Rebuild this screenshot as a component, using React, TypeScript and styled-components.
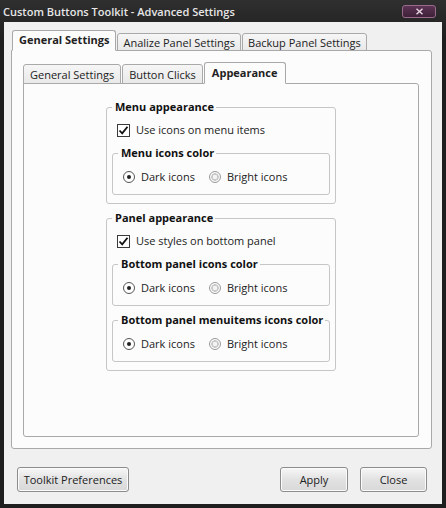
import React from 'react';
import styled, { createGlobalStyle } from 'styled-components';

const GlobalStyle = createGlobalStyle`
  html, body {
    margin: 0;
    padding: 0;
    background: #1c1c1c;
  }
  body {
    font-family: "Open Sans", "DejaVu Sans", sans-serif;
    font-size: 11px;
    color: #1a1a1a;
  }
`;

const Window = styled.div`
  width: 446px;
  height: 508px;
  box-sizing: border-box;
  display: flex;
  flex-direction: column;
  background: linear-gradient(#2f2f2f, #1e1e1e 40px);
  padding: 0 4px 4px 4px;
`;

const TitleBar = styled.div`
  height: 22px;
  display: flex;
  align-items: center;
  justify-content: space-between;
  margin-left: -1px;
`;

const TitleText = styled.span`
  color: #e6e6e6;
  font-weight: 600;
  font-size: 11px;
`;

const CloseBox = styled.div`
  width: 32px;
  height: 11px;
  margin-right: 6px;
  margin-top: 1px;
  border: 1px solid #9a6a8c;
  border-radius: 3px;
  background: linear-gradient(#5c3454, #3e2038);
  display: flex;
  align-items: center;
  justify-content: center;
`;

const Client = styled.div`
  flex: 1;
  background: #f0f0f0;
  display: flex;
  flex-direction: column;
  padding: 8px 10px 12px 7px;
`;

const TabStrip = styled.div<{ $indent: number }>`
  display: flex;
  align-items: flex-end;
  padding-left: ${(p) => p.$indent}px;
  position: relative;
  z-index: 1;
  margin-bottom: -1px;
`;

const Tab = styled.div<{ $active?: boolean; $h: number; $lift: number; $pad: number }>`
  height: ${(p) => (p.$active ? p.$h + p.$lift : p.$h)}px;
  box-sizing: border-box;
  padding: 0 ${(p) => p.$pad}px;
  display: flex;
  align-items: center;
  border: 1px solid #a9a9a9;
  border-bottom: 1px solid ${(p) => (p.$active ? '#fcfcfc' : '#a9a9a9')};
  border-radius: 3px 3px 0 0;
  margin-right: 1px;
  background: ${(p) => (p.$active ? '#fcfcfc' : 'linear-gradient(#f6f6f6, #e9e9e9)')};
  font-weight: ${(p) => (p.$active ? 700 : 400)};
  color: #222;
  white-space: nowrap;
  padding-bottom: ${(p) => (p.$active ? p.$lift : 0)}px;
`;

const OuterPanel = styled.div`
  flex: 1;
  background: #fcfcfc;
  border: 1px solid #a9a9a9;
  border-radius: 0 3px 3px 3px;
  display: flex;
  flex-direction: column;
  padding: 11px 12px 11px 11px;
`;

const InnerPanel = styled.div`
  flex: 1;
  background: #fcfcfc;
  border: 1px solid #a9a9a9;
  border-radius: 0 3px 3px 3px;
  display: flex;
  flex-direction: column;
  align-items: center;
  padding-top: 15px;
`;

const Group = styled.fieldset<{ $outer?: boolean }>`
  box-sizing: border-box;
  width: ${(p) => (p.$outer ? '230px' : '218px')};
  margin: ${(p) => (p.$outer ? '0' : '7px 0 0 0')};
  padding: ${(p) => (p.$outer ? '7px 5px 8px 5px' : '8px 5px 9px 5px')};
  border: 1px solid #c6c6c6;
  border-radius: 3px;
  min-width: 0;

  & + & {
    margin-top: 6px;
  }
`;

const Legend = styled.legend`
  padding: 0 2px 0 3px;
  font-weight: 700;
  line-height: 16px;
  color: #111;
  white-space: nowrap;
`;

const Row = styled.div`
  display: flex;
  align-items: center;
  height: 16px;
  padding-left: 5px;
`;

const Label = styled.span`
  line-height: 16px;
  color: #222;
  margin-right: 14px;
`;

const CheckSquare = styled.span`
  width: 13px;
  height: 13px;
  box-sizing: border-box;
  border: 1px solid #3a3a3a;
  background: #fff;
  margin-right: 6px;
  display: flex;
  align-items: center;
  justify-content: center;
`;

const RadioCircle = styled.span<{ $on?: boolean }>`
  width: 12px;
  height: 12px;
  box-sizing: border-box;
  border-radius: 50%;
  border: 1px solid ${(p) => (p.$on ? '#555' : '#9a9a9a')};
  background: ${(p) => (p.$on ? '#fff' : 'radial-gradient(circle, #f4f4f4 0 2px, #c8c8c8 2.5px 3.5px, #fafafa 4px)')};
  margin-right: 6px;
  display: flex;
  align-items: center;
  justify-content: center;

  &::after {
    content: '';
    width: 4px;
    height: 4px;
    border-radius: 50%;
    background: ${(p) => (p.$on ? '#222' : 'transparent')};
  }
`;

const Footer = styled.div`
  display: flex;
  align-items: center;
  padding: 18px 5px 0 6px;
`;

const Button = styled.button<{ $w: number; $gap?: number }>`
  width: ${(p) => p.$w}px;
  height: 25px;
  font-family: inherit;
  font-size: 11px;
  color: #222;
  border: 1px solid #8c8c8c;
  border-radius: 3px;
  background: linear-gradient(#f7f7f7, #e2e2e2 50%, #d8d8d8);
  box-shadow: inset 0 0 0 1px #fbfbfb;
  padding: 0;
  margin-left: ${(p) => p.$gap ?? 0}px;
`;

const Spacer = styled.div`
  flex: 1;
`;

function Check() {
  return (
    <CheckSquare>
      <svg width="11" height="11" viewBox="0 0 11 11">
        <path d="M1.5 5.5 L4.2 8.4 L9.5 1.8" fill="none" stroke="#111" strokeWidth="1.8" />
      </svg>
    </CheckSquare>
  );
}

function RadioPair() {
  return (
    <Row>
      <RadioCircle $on />
      <Label>Dark icons</Label>
      <RadioCircle />
      <Label>Bright icons</Label>
    </Row>
  );
}

export default function App() {
  return (
    <>
      <GlobalStyle />
      <Window>
        <TitleBar>
          <TitleText>Custom Buttons Toolkit - Advanced Settings</TitleText>
          <CloseBox>
            <svg width="9" height="7" viewBox="0 0 9 7">
              <path d="M1.5 0.8 L7.5 6.2 M7.5 0.8 L1.5 6.2" stroke="#e8d8e4" strokeWidth="1.4" />
            </svg>
          </CloseBox>
        </TitleBar>
        <Client>
          <TabStrip $indent={1}>
            <Tab $active $h={18} $lift={3} $pad={6}>General Settings</Tab>
            <Tab $h={18} $lift={3} $pad={5}>Analize Panel Settings</Tab>
            <Tab $h={18} $lift={3} $pad={5}>Backup Panel Settings</Tab>
          </TabStrip>
          <OuterPanel>
            <TabStrip $indent={0}>
              <Tab $h={20} $lift={2} $pad={6}>General Settings</Tab>
              <Tab $h={20} $lift={2} $pad={6}>Button Clicks</Tab>
              <Tab $active $h={20} $lift={2} $pad={7}>Appearance</Tab>
            </TabStrip>
            <InnerPanel>
              <Group $outer>
                <Legend>Menu appearance</Legend>
                <Row>
                  <Check />
                  <Label>Use icons on menu items</Label>
                </Row>
                <Group>
                  <Legend>Menu icons color</Legend>
                  <RadioPair />
                </Group>
              </Group>
              <Group $outer>
                <Legend>Panel appearance</Legend>
                <Row>
                  <Check />
                  <Label>Use styles on bottom panel</Label>
                </Row>
                <Group>
                  <Legend>Bottom panel icons color</Legend>
                  <RadioPair />
                </Group>
                <Group>
                  <Legend>Bottom panel menuitems icons color</Legend>
                  <RadioPair />
                </Group>
              </Group>
            </InnerPanel>
          </OuterPanel>
          <Footer>
            <Button $w={112}>Toolkit Preferences</Button>
            <Spacer />
            <Button $w={68}>Apply</Button>
            <Button $w={67} $gap={12}>Close</Button>
          </Footer>
        </Client>
      </Window>
    </>
  );
}
